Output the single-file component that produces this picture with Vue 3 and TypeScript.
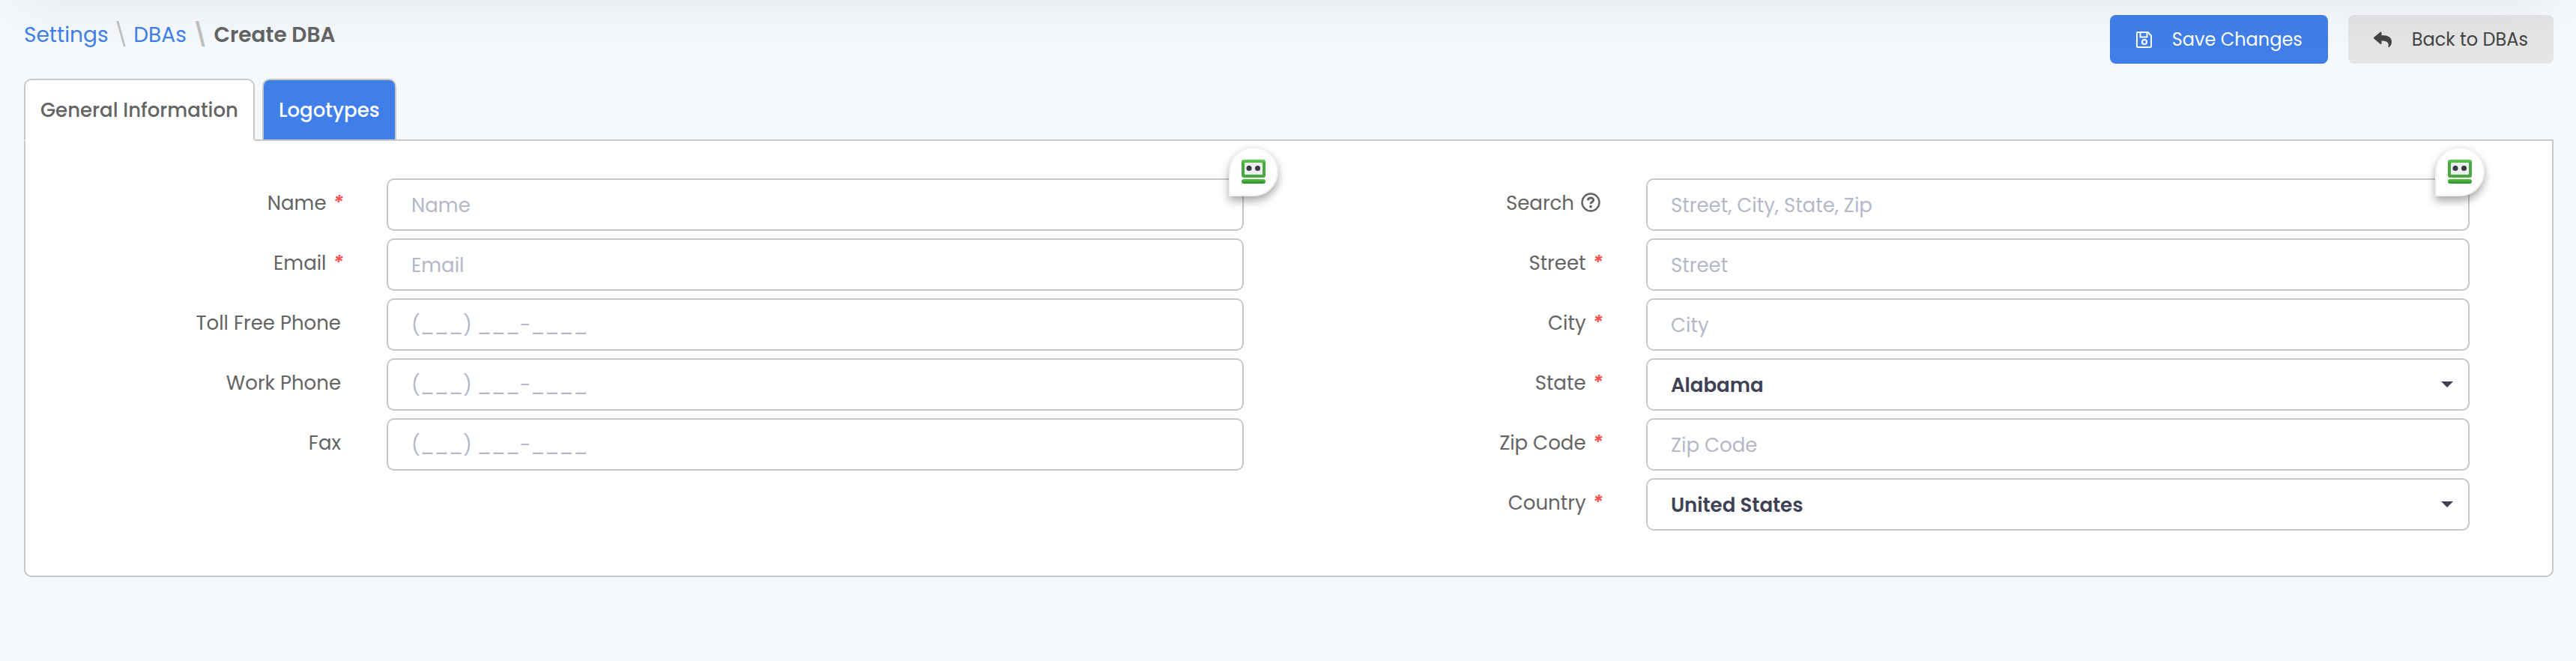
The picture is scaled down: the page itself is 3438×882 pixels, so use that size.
<script setup lang="ts">
import { reactive } from 'vue'

interface Field {
  id: string
  label: string
  placeholder?: string
  required?: boolean
  help?: boolean
  badge?: boolean
  options?: string[]
}

const phoneMask = '(___) ___-____'

const columns: { side: string; fields: Field[] }[] = [
  {
    side: 'left',
    fields: [
      { id: 'name', label: 'Name', placeholder: 'Name', required: true, badge: true },
      { id: 'email', label: 'Email', placeholder: 'Email', required: true },
      { id: 'tollFree', label: 'Toll Free Phone', placeholder: phoneMask },
      { id: 'workPhone', label: 'Work Phone', placeholder: phoneMask },
      { id: 'fax', label: 'Fax', placeholder: phoneMask },
    ],
  },
  {
    side: 'right',
    fields: [
      { id: 'search', label: 'Search', placeholder: 'Street, City, State, Zip', help: true, badge: true },
      { id: 'street', label: 'Street', placeholder: 'Street', required: true },
      { id: 'city', label: 'City', placeholder: 'City', required: true },
      { id: 'state', label: 'State', required: true, options: ['Alabama', 'Alaska', 'Arizona'] },
      { id: 'zip', label: 'Zip Code', placeholder: 'Zip Code', required: true },
      { id: 'country', label: 'Country', required: true, options: ['United States', 'Canada'] },
    ],
  },
]

const form = reactive<Record<string, string>>({
  name: '', email: '', tollFree: '', workPhone: '', fax: '',
  search: '', street: '', city: '', zip: '',
  state: 'Alabama',
  country: 'United States',
})
</script>

<template>
  <div class="page">
    <div class="top-shade" aria-hidden="true"></div>
    <header class="bar">
      <nav class="crumbs" aria-label="Breadcrumb">
        <a href="#settings">Settings</a>
        <span class="sep">\</span>
        <a href="#dbas">DBAs</a>
        <span class="sep bold">\</span>
        <span class="current">Create DBA</span>
      </nav>
      <div class="actions">
        <button type="button" class="btn primary">
          <svg class="icon" viewBox="0 0 24 24" fill="none" stroke="currentColor" stroke-width="2" stroke-linejoin="round">
            <path d="M3 2H16.500L21 6.500V20.500Q21 22 19.500 22H3.500Q2 22 2 20.500V3Q2 2 3 2Z" />
            <path d="M6.500 2V8.500H15.500V2" />
            <circle cx="12" cy="15" r="3" stroke-width="2.200" />
          </svg>
          Save Changes
        </button>
        <button type="button" class="btn secondary">
          <svg class="icon" viewBox="0 0 24 24" fill="currentColor">
            <path d="M0.300 8.800L8.800 1.700Q10.300 0.800 10.500 2.500V6Q24 6 24 15Q24 19 20.500 22Q19.300 22.700 19.500 21.300Q21.500 13.500 10.500 13.300V17Q10.300 18.700 8.800 17.800L0.300 10.500Q-0.500 9.700 0.300 8.800Z" />
          </svg>
          Back to DBAs
        </button>
      </div>
    </header>

    <div class="tabs" role="tablist">
      <button type="button" class="tab active" role="tab" aria-selected="true">General Information</button>
      <button type="button" class="tab" role="tab" aria-selected="false">Logotypes</button>
    </div>

    <form class="panel" @submit.prevent>
      <div v-for="col in columns" :key="col.side" class="column" :class="col.side">
        <div v-for="field in col.fields" :key="field.id" class="row">
          <label :for="field.id" class="label" :class="{ plain: !field.required }">
            {{ field.label }}
            <span v-if="field.required" class="star">*</span>
            <svg v-if="field.help" class="help" viewBox="0 0 26 26" fill="none" stroke="currentColor">
              <circle cx="13" cy="13" r="11.500" stroke-width="2.400" />
              <path d="M9.200 10.300C9.800 6 16.700 6.200 16.700 10C16.700 12.600 13 12.500 13 15.200" stroke-width="3" />
              <circle cx="13" cy="18.700" r="1.900" fill="currentColor" stroke="none" />
            </svg>
          </label>
          <div class="control">
            <select v-if="field.options" :id="field.id" v-model="form[field.id]" class="input select">
              <option v-for="o in field.options" :key="o">{{ o }}</option>
            </select>
            <input v-else :id="field.id" v-model="form[field.id]" type="text" class="input" :placeholder="field.placeholder" />
            <svg v-if="field.options" class="caret" viewBox="0 0 16 8"><path d="M0 0H16L8 8Z" fill="#3f4254" /></svg>
            <span v-if="field.badge" class="badge">
              <svg class="robot" viewBox="0 0 32 32">
                <defs>
                  <linearGradient :id="field.id + '-head'" x1="0" y1="0" x2="0" y2="1">
                    <stop offset="0" stop-color="#5fd455" />
                    <stop offset="0.200" stop-color="#48ab40" />
                    <stop offset="1" stop-color="#4aa842" />
                  </linearGradient>
                  <linearGradient :id="field.id + '-base'" x1="0" y1="0" x2="0" y2="1">
                    <stop offset="0" stop-color="#55c64b" />
                    <stop offset="1" stop-color="#278a20" />
                  </linearGradient>
                </defs>
                <rect width="32" height="24" rx="3" :fill="`url(#${field.id}-head)`" />
                <rect x="4" y="4" width="24" height="16" rx="1" fill="#eeeeee" />
                <circle cx="10" cy="11.500" r="3.500" fill="#353b43" />
                <circle cx="21.500" cy="11.500" r="3.500" fill="#353b43" />
                <rect y="26" width="32" height="6" rx="3" :fill="`url(#${field.id}-base)`" />
              </svg>
            </span>
          </div>
        </div>
      </div>
    </form>
  </div>
</template>

<style>
body {
  margin: 0;
  background: #f5f9fc;
}
</style>

<style scoped>
.page {
  position: relative;
  min-height: 100vh;
  box-sizing: border-box;
  padding: 20px 30px 0 32px;
  overflow: hidden;
  background: #f5f9fc;
  color: #646464;
  font-family: Poppins, Inter, "Noto Sans", sans-serif;
  font-size: 26px;
  line-height: 40px;
}
.top-shade {
  position: absolute;
  z-index: 3;
  top: -60px;
  left: 30px;
  right: 30px;
  height: 60px;
  box-shadow: 0 0 70px rgba(82, 63, 105, 0.13);
  pointer-events: none;
}
.bar {
  display: flex;
  justify-content: space-between;
  align-items: flex-start;
}
.crumbs {
  display: flex;
  align-items: center;
  gap: 7px;
  padding-top: 7px;
  font-size: 28px;
}
.crumbs a {
  color: #407fe9;
  text-decoration: none;
}
.sep {
  color: #c0c0c0;
  font-size: 30px;
}
.bold {
  font-weight: 600;
}
.current {
  font-weight: 600;
}
.actions {
  display: flex;
  gap: 27px;
}
.btn {
  display: flex;
  align-items: center;
  height: 65px;
  padding: 0 34px;
  gap: 25px;
  border: 0;
  border-radius: 8px;
  font: inherit;
  font-size: 24px;
}
.primary {
  background: #407fe9;
  color: #fff;
}
.secondary {
  gap: 27px;
  background: #e5e5e5;
  color: #444;
}
.icon {
  width: 24px;
  height: 24px;
}
.tabs {
  display: flex;
  gap: 10px;
  margin-top: 20px;
}
.tab {
  height: 83px;
  padding: 0 20px;
  margin-bottom: -2px;
  border: 2px solid #c8c8c8;
  border-radius: 10px 10px 0 0;
  background: #407fe9;
  color: #fff;
  font: inherit;
  font-weight: 500;
}
.tab.active {
  position: relative;
  z-index: 1;
  border-bottom-color: #fff;
  background: #fff;
  color: #646464;
}
.panel {
  display: grid;
  grid-template-columns: 1fr 1fr;
  padding: 50px 0 60px;
  border: 2px solid #c8c8c8;
  border-radius: 0 0 10px 10px;
  background: #fff;
}
.column {
  display: flex;
  flex-direction: column;
  gap: 10px;
}
.left {
  padding-right: 60px;
}
.right {
  padding-right: 110px;
}
.row {
  display: grid;
  grid-template-columns: 424fr 1144fr;
  column-gap: 58px;
}
.right .row {
  grid-template-columns: 419fr 1099fr;
}
.label {
  display: flex;
  justify-content: flex-end;
  gap: 9px;
  padding-top: 13px;
}
.plain {
  padding-right: 3px;
}
.star {
  color: #f64e4e;
  font-style: italic;
  font-weight: 600;
}
.help {
  width: 26px;
  height: 26px;
  padding-top: 6px;
}
.control {
  position: relative;
  min-width: 0;
}
.input {
  display: block;
  width: 100%;
  height: 70px;
  box-sizing: border-box;
  padding: 2px 31px 0;
  border: 2px solid #c8c8c8;
  border-radius: 10px;
  outline: 0;
  background: #fff;
  color: #3f4254;
  font: inherit;
}
.input::placeholder {
  color: #b5b8c9;
  opacity: 1;
}
.select {
  appearance: none;
  font-weight: 600;
}
.caret {
  position: absolute;
  top: 31px;
  right: 22px;
  width: 16px;
  height: 8px;
  pointer-events: none;
}
.badge {
  position: absolute;
  z-index: 2;
  top: -42px;
  right: -46px;
  display: flex;
  align-items: center;
  justify-content: center;
  width: 66px;
  height: 66px;
  box-sizing: border-box;
  border: 2px solid #f2f2f2;
  border-radius: 50% 50% 50% 0;
  background: #fff;
  box-shadow: 0 6px 12px rgba(0, 0, 0, 0.35);
}
.right .badge {
  right: -20px;
}
.robot {
  width: 32px;
  height: 32px;
}
</style>
